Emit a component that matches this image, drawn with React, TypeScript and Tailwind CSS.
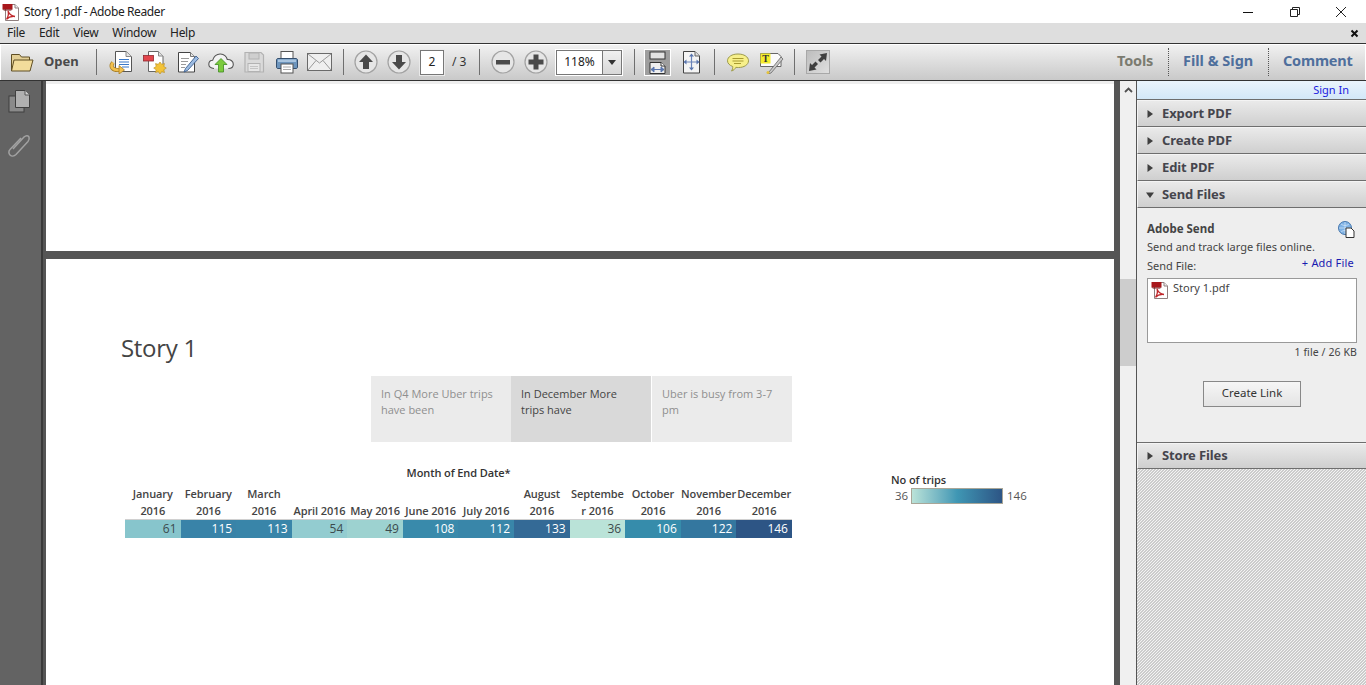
import React from "react";

const ui = { fontFamily: '"Noto Sans", "Open Sans", sans-serif' };
const story = { fontFamily: '"Open Sans", "Noto Sans", sans-serif' };

const PdfIcon = ({ size = 18 }: { size?: number }) => (
  <svg width={size} height={size} viewBox="0 0 18 18">
    <path d="M3.500 1.500H13l3.500 3.500v12.500h-13z" fill="#fff" stroke="#8f7f7f" />
    <path d="M13 1.500V5h3.500" fill="#eee" stroke="#8f7f7f" />
    <path d="M0.500 1h10v5.500h-10z" fill="#a8181c" />
    <path d="M0.500 6.500h10l-1.500 1h-7z" fill="#701012" />
    <path d="M6 8c1.200 3 3 5 7 5.500-3-.3-6.500.5-8.500 2.800C6 14 7 11 6 8z" fill="none" stroke="#c0262a" strokeWidth="1.300" />
  </svg>
);

const Sv = ({ children, w = 24, h = 24 }: { children: React.ReactNode; w?: number; h?: number }) => (
  <svg width={w} height={h} viewBox={`0 0 ${w} ${h}`} className="block">
    {children}
  </svg>
);

const IconCombine = () => (
  <Sv w={25}>
    <path d="M6.500 1.500H17l5.500 5v15h-16z" fill="#fff" stroke="#555" />
    <path d="M17 1.500v5h5.500" fill="#e2e2e2" stroke="#888" />
    <path d="M10 9.500h10M10 12h10M10 14.500h10M13 17h7" stroke="#3a78c8" strokeWidth="1.200" />
    <path d="M4 12.500C.5 17 4 20.500 10 20" fill="none" stroke="#a87f28" strokeWidth="4" />
    <path d="M4 12.500C.5 17 4 20.500 10 20" fill="none" stroke="#f2c04d" strokeWidth="2.600" />
    <path d="M10 15.500l5.500 4.500-5.500 4z" fill="#f2c04d" stroke="#a87f28" strokeWidth="0.800" />
  </Sv>
);
const IconCreate = () => (
  <Sv>
    <path d="M5.500 1.500H15.500l4.500 4.500v15.500H5.500z" fill="#fff" stroke="#666" />
    <path d="M15.500 1.500V6H20" fill="#e2e2e2" stroke="#888" />
    <rect x="0.500" y="5.500" width="10" height="5.500" fill="#e2454c" stroke="#8f2a30" strokeWidth="0.800" />
    <path d="M17 12l1.700 2.300 2.800-.7-.7 2.800 2.500 1.700-2.500 1.700.7 2.700-2.800-.7L17 24l-1.700-2.200-2.800.7.700-2.700L10.700 18.100l2.500-1.700-.7-2.800 2.800.7z" fill="#f3c338" stroke="#b48a20" strokeWidth="0.600" />
  </Sv>
);
const IconEdit = () => (
  <Sv>
    <path d="M2.500 2.500H14.500l4 4v15.500h-16z" fill="#fff" stroke="#444" />
    <path d="M14.500 2.500v4h4" fill="#e6e6e6" stroke="#777" />
    <path d="M5 8.500h8M5 11.500h7M5 14.500h5M5 17.500h4" stroke="#9a9a9a" />
    <path d="M9.500 18.500L8 22l3.500-1.500L22.500 8.500 20 6z" fill="#9dbce2" stroke="#3c5f90" strokeWidth="0.900" />
  </Sv>
);
const IconCloud = () => (
  <Sv w={26}>
    <path d="M6 18.500C2.500 18.500.8 16.500.8 14.200.8 12 2.500 10.300 4.700 10.200 5.500 6.500 8.700 3.800 12.500 4c3.500.2 6 2.500 6.800 5.500 3.500-.2 6 2 6 4.700 0 2.500-2 4.300-5 4.300" fill="#f3f3f3" stroke="#555" strokeWidth="1.100" />
    <path d="M13 8.500l6 6h-3.500V22h-5v-7.500H7z" fill="#7ccb3e" stroke="#3f8a22" strokeWidth="0.800" />
  </Sv>
);
const IconSave = () => (
  <Sv>
    <path d="M3 2.500h16l2.500 2.500v17H3z" fill="#dadada" stroke="#b2b2b2" strokeWidth="1.200" />
    <rect x="7" y="3" width="10" height="6" fill="#cfcfcf" stroke="#b2b2b2" />
    <rect x="6" y="13.500" width="12" height="8" fill="#e6e6e6" stroke="#b2b2b2" />
    <path d="M8 16.500h8M8 18.500h8" stroke="#c4c4c4" />
  </Sv>
);
const IconPrint = () => (
  <Sv>
    <rect x="6" y="1.500" width="12" height="8" fill="#fff" stroke="#555" />
    <path d="M3 8.500h18c1 0 1.500.8 1.500 1.500v7c0 1-.6 1.500-1.500 1.500H3c-1 0-1.500-.6-1.500-1.500v-7c0-.8.500-1.500 1.500-1.500z" fill="#6d95bd" stroke="#354f6e" />
    <rect x="3" y="9.500" width="18" height="2.500" fill="#a9c5e0" />
    <rect x="6" y="14" width="12" height="9" fill="#fff" stroke="#555" />
    <path d="M8 17h8M8 19.500h8" stroke="#aaa" />
  </Sv>
);
const IconMail = () => (
  <Sv w={25}>
    <rect x="0.500" y="3.500" width="24" height="17" fill="#efefef" stroke="#6a6a6a" />
    <path d="M1 4L12.500 13 24 4M1 20L9 10.500M24 20L16 10.500" fill="none" stroke="#9a9a9a" />
  </Sv>
);
const Circle = ({ d }: { d: string }) => (
  <Sv>
    <circle cx="12" cy="12" r="11" fill="#e6e6e6" stroke="#a2a2a2" strokeWidth="1.200" />
    <path d={d} fill="#4a4a4a" />
  </Sv>
);
const IconFitWidth = () => (
  <div className="w-[27px] h-[27px] bg-[#9e9e9e] border border-white flex items-center justify-center">
    <svg width="19" height="23" viewBox="0 0 19 23" className="block">
      <rect x="2" y="1" width="15" height="7" fill="#e2e2e2" stroke="#333" />
      <path d="M2 11.500h11l4 3.500v7.500H2z" fill="#efefef" stroke="#333" />
      <path d="M13 11.500V15h4" fill="#fff" stroke="#333" />
      <path d="M3 18.500h13M3 18.500l3-2.500v5zM16 18.500l-3-2.500v5z" fill="#5a76ae" stroke="#5a76ae" />
    </svg>
  </div>
);
const IconFitPage = () => (
  <Sv>
    <path d="M4.500 1.500H16l4.500 4.500v17h-16z" fill="#f4f4f4" stroke="#444" />
    <path d="M16 1.500V6h4.500" fill="#ddd" stroke="#666" />
    <path d="M12.500 5v14M5.500 12h14" stroke="#6a83b8" strokeWidth="1.200" />
    <path d="M12.500 3.500l2.500 3h-5zM12.500 20.500l2.500-3h-5zM4.500 12l3-2.500v5zM20.500 12l-3-2.500v5z" fill="#5a76ae" />
  </Sv>
);
const IconComment = () => (
  <Sv>
    <path d="M12 4c6 0 10.500 2.800 10.500 6.800S18 17.500 12.500 17.500c-1 0-1.800 0-2.600-.2C9 19 7.500 20.500 5.500 21c1-1.200 1.300-3 1.200-4.500C3.500 15.300 1.500 13.300 1.500 10.800 1.500 6.800 6 4 12 4z" fill="#f7f08a" stroke="#9c9a4c" />
    <path d="M6.500 8.500h11M6.500 11h11M8 13.500h7" stroke="#a89a30" />
  </Sv>
);
const IconNote = () => (
  <Sv w={26}>
    <path d="M2.500 3.500H20l3 3v10H2.500z" fill="#fbfbfb" stroke="#666" />
    <rect x="2.500" y="3.500" width="10" height="10" fill="#f4ec2c" />
    <text x="7.500" y="12" fontSize="10" textAnchor="middle" fontWeight="700" fill="#333" style={{ fontFamily: '"Liberation Serif", serif' }}>T</text>
    <path d="M11 22l-1 2 3-1L25 9l-2-2z" fill="#c9c9c9" stroke="#666" strokeWidth="0.800" />
    <circle cx="10" cy="22.500" r="1.500" fill="#e5c23a" />
  </Sv>
);
const IconFull = () => (
  <div className="w-[24px] h-[24px] border border-[#a8a8a8] bg-gradient-to-br from-[#bdbdbd] to-[#dfdfdf] flex items-center justify-center">
    <svg width="22" height="22" viewBox="0 0 22 22" className="block">
      <path d="M20 2l-7.500 1.500 2 2-3.500 3.500 2.500 2.500 3.500-3.500 2 2z" fill="#3f3f3f" />
      <path d="M2 20l7.500-1.500-2-2 3.500-3.500L8.500 10.500 5 14l-2-2z" fill="#3f3f3f" />
    </svg>
  </div>
);

const Folder = () => (
  <svg width="24" height="22" viewBox="0 0 24 22" className="block">
    <path d="M1.500 20V3.500h8l2 2.500h8v3" fill="#e3cf95" stroke="#5f4e24" />
    <path d="M1.500 20L4 9h19l-3 11z" fill="#f2dc9b" stroke="#5f4e24" />
  </svg>
);

const Slot = ({ children, className = "" }: { children: React.ReactNode; className?: string }) => (
  <div className={`w-[33px] flex items-center justify-center ${className}`}>{children}</div>
);

const Sep = ({ className = "" }: { className?: string }) => (
  <div className={`w-px h-[26px] bg-[#6f6f6f] ${className}`} />
);
const Dotted = () => <div className="h-[28px] border-l border-dotted border-[#555]" />;

const Section = ({ label, open = false, size = "h-[27px] pt-[1px]" }: { label: string; open?: boolean; size?: string }) => (
  <div className={`${size} flex items-center pl-[8px] border-b border-[#6e6e6e] border-l border-l-[#f4f4f4] shadow-[inset_0_1px_0_#f4f4f4] bg-gradient-to-b from-[#ebebeb] to-[#cfcfcf]`}>
    <svg width="8" height="8" viewBox="0 0 8 8" className="block mr-[8px]">
      {open ? <path d="M0 1.500h8L4 7z" fill="#3f3f3f" /> : <path d="M1.500 0L7 4 1.500 8z" fill="#3f3f3f" />}
    </svg>
    <span className="text-[13px] font-bold text-[#45454d] whitespace-nowrap tracking-[-0.1px]">{label}</span>
  </div>
);

const months: { l: React.ReactNode; v: number; bg: string; light?: boolean }[] = [
  { l: <>January<br />2016</>, v: 61, bg: "bg-[#87c5cc]", light: true },
  { l: <>February<br />2016</>, v: 115, bg: "bg-[#3983a8]" },
  { l: <>March<br />2016</>, v: 113, bg: "bg-[#3985a9]" },
  { l: "April 2016", v: 54, bg: "bg-[#93ccd0]", light: true },
  { l: "May 2016", v: 49, bg: "bg-[#9dd2d0]", light: true },
  { l: "June 2016", v: 108, bg: "bg-[#398aab]" },
  { l: "July 2016", v: 112, bg: "bg-[#3986a9]" },
  { l: <>August<br />2016</>, v: 133, bg: "bg-[#346a96]" },
  { l: <>Septembe<br />r 2016</>, v: 36, bg: "bg-[#bae3d8]", light: true },
  { l: <>October<br />2016</>, v: 106, bg: "bg-[#368cab]" },
  { l: <>November<br />2016</>, v: 122, bg: "bg-[#34779f]" },
  { l: <>December<br />2016</>, v: 146, bg: "bg-[#2d5585]" },
];

const Tab = ({ children, active = false, className = "" }: { children: React.ReactNode; active?: boolean; className?: string }) => (
  <div className={`w-[140px] h-[66px] pl-[10px] pt-[10px] text-[11px] leading-[16px] ${active ? "bg-[#d9d9d9] text-[#444]" : "bg-[#ebebeb] text-[#8f8f8f]"} ${className}`}>
    {children}
  </div>
);

export default function App() {
  return (
    <div className="w-[1366px] h-[685px] overflow-hidden flex flex-col bg-white" style={ui}>
      {/* Title bar */}
      <div className="h-[23px] flex items-center bg-white shrink-0">
        <div className="ml-[2px] w-[22px]"><PdfIcon /></div>
        <span className="text-[12px] text-[#222] whitespace-nowrap tracking-[-0.4px]">Story 1.pdf - Adobe Reader</span>
        <div className="ml-auto flex items-center">
          <svg width="12" height="12" viewBox="0 0 12 12" className="block mr-[35px]"><path d="M1 6.500h10" stroke="#111" /></svg>
          <svg width="12" height="12" viewBox="0 0 12 12" className="block mr-[34px]"><path d="M1.500 3.500h7v7h-7zM3.500 3.500v-2h7v7h-2" fill="none" stroke="#222" /></svg>
          <svg width="12" height="12" viewBox="0 0 12 12" className="block mr-[19px]"><path d="M1 1l10 10M11 1L1 11" stroke="#222" /></svg>
        </div>
      </div>
      {/* Menu bar */}
      <div className="h-[20px] flex items-center bg-[#dedede] shrink-0 text-[12px] text-[#222] pl-[7px] gap-[14px] tracking-[-0.3px]">
        <span>File</span><span>Edit</span><span>View</span><span>Window</span><span>Help</span>
        <svg width="9" height="9" viewBox="0 0 9 9" className="block ml-auto mr-[7px]"><path d="M1.500 1.500l6 6M7.500 1.500l-6 6" stroke="#111" strokeWidth="2" /></svg>
      </div>
      {/* Toolbar */}
      <div className="h-[38px] shrink-0 border-y border-[#333] bg-gradient-to-b from-[#f2f2f2] to-[#c9c9c9] flex items-center shadow-[inset_1px_1px_0_#fff,inset_-1px_0_0_#fff]">
        <div className="w-[96px] flex items-center pl-[10px] shrink-0">
          <Folder />
          <span className="ml-[10px] text-[13px] font-bold text-[#4a4a4a]">Open</span>
        </div>
        <Sep />
        <Slot className="ml-[8px]"><IconCombine /></Slot>
        <Slot><IconCreate /></Slot>
        <Slot><IconEdit /></Slot>
        <Slot><IconCloud /></Slot>
        <Slot><IconSave /></Slot>
        <Slot><IconPrint /></Slot>
        <Slot><IconMail /></Slot>
        <Sep className="ml-[7px]" />
        <Slot className="ml-[5px]"><Circle d="M12 4.500l7 7.500h-4v7H9v-7H5z" /></Slot>
        <Slot><Circle d="M12 19.500L5 12h4V5h6v7h4z" /></Slot>
        <div className="ml-[4px] w-[26px] h-[27px] bg-white border border-[#e9e9e9] outline outline-1 outline-[#777] -outline-offset-2 flex items-center justify-center text-[12px] text-[#222]">2</div>
        <div className="ml-[7px] w-[17px] text-[12px] text-[#333] whitespace-nowrap">/ 3</div>
        <Sep className="ml-[10px]" />
        <Slot className="ml-[6px]"><Circle d="M5 10h14v4.500H5z" /></Slot>
        <Slot><Circle d="M9.500 4.500h5v5h5v5h-5v5h-5v-5h-5v-5h5z" /></Slot>
        <div className="ml-[3px] w-[68px] h-[27px] flex border border-white bg-[#777] p-px shrink-0">
          <div className="w-[45px] bg-white flex items-center justify-center text-[12px] text-[#222]">118%</div>
          <div className="flex-1 ml-px bg-gradient-to-b from-[#f0f0f0] to-[#d8d8d8] flex items-center justify-center">
            <svg width="8" height="5" viewBox="0 0 8 5" className="block"><path d="M0 0h8L4 5z" fill="#333" /></svg>
          </div>
        </div>
        <Sep className="ml-[11px]" />
        <Slot className="ml-[6px]"><IconFitWidth /></Slot>
        <Slot><IconFitPage /></Slot>
        <Sep className="ml-[7px]" />
        <Slot className="ml-[6px]"><IconComment /></Slot>
        <Slot><IconNote /></Slot>
        <Sep className="ml-[7px]" />
        <Slot className="ml-[6px]"><IconFull /></Slot>
        <div className="ml-auto flex items-center pr-[14px] text-[14.500px] font-bold whitespace-nowrap">
          <div className="w-[37px] text-[#7b7b70] mt-[-3px] tracking-[-0.2px]">Tools</div>
          <div className="ml-[14px]"><Dotted /></div>
          <div className="ml-[14px] w-[71px] text-[#4f6f9c] mt-[-3px]">Fill &amp; Sign</div>
          <div className="ml-[14px]"><Dotted /></div>
          <div className="ml-[14px] w-[69px] text-[#4f6f9c] mt-[-3px] tracking-[-0.2px]">Comment</div>
        </div>
      </div>
      {/* Body */}
      <div className="flex-1 flex min-h-0">
        {/* Left nav */}
        <div className="w-[41px] shrink-0 bg-[#636363] flex flex-col items-center pt-[8px]">
          <svg width="24" height="24" viewBox="0 0 24 24" className="block ml-[-4px]">
            <rect x="2" y="7" width="15" height="16" fill="#8a8a8a" stroke="#3f3f3f" />
            <path d="M8.500 1.500H18l4.500 4.500v12.500h-14z" fill="#b0b0b0" stroke="#3f3f3f" />
            <path d="M18 1.500V6h4.500" fill="#d0d0d0" stroke="#555" />
          </svg>
          <svg width="24" height="24" viewBox="0 0 24 24" className="block mt-[20px] ml-[-4px]">
            <path d="M6 16l11-12c2-2 4.500-1.500 5 0s.3 3-1 4.500L9 21.500c-2 2-4.500 2-6 .5S1.500 18 3 16.500L14 5" fill="none" stroke="#a2a2a2" strokeWidth="1.500" />
          </svg>
        </div>
        <div className="w-[5px] shrink-0 bg-[#555] border-l-2 border-[#3a3a3a]" />
        {/* Document */}
        <div className="w-[1068px] shrink-0 flex flex-col overflow-hidden">
          <div className="h-[170px] shrink-0 bg-white border-t-[3px] border-[#eeeeee]" />
          <div className="h-[8px] shrink-0 bg-[#555]" />
          <div className="flex-1 bg-white text-[#333]" style={story}>
            <div className="ml-[75px] mt-[73px] h-[32px] text-[24px] leading-[32px] text-[#444] tracking-[-0.3px]">Story 1</div>
            <div className="ml-[325px] mt-[12px] flex">
              <Tab>In Q4 More Uber trips<br />have been</Tab>
              <Tab active>In December More<br />trips have</Tab>
              <Tab className="ml-px">Uber is busy from 3-7<br />pm</Tab>
            </div>
            <div className="flex">
              <div className="ml-[79px] w-[667px] shrink-0">
                <div className="mt-[23px] h-[16px] text-center text-[11px] leading-[16px] font-semibold text-[#333] tracking-[-0.1px]">Month of End Date*</div>
                <div className="mt-[4px] h-[34px] grid grid-cols-12 items-end">
                  {months.map((m, i) => (
                    <div key={i} className="text-center text-[11px] leading-[17px] font-semibold text-[#444] whitespace-nowrap flex justify-center tracking-[-0.1px]">
                      <div>{m.l}</div>
                    </div>
                  ))}
                </div>
                <div className="grid grid-cols-12 h-[18px] border-t border-[#d0d0d0]">
                  {months.map((m, i) => (
                    <div key={i} className={`${m.bg} ${m.light ? "text-[#3c4a4c]" : "text-white"} text-right pr-[4px] text-[12px] leading-[18px]`}>{m.v}</div>
                  ))}
                </div>
              </div>
              <div className="ml-[99px] mt-[30px] text-[11px]">
                <div className="h-[16px] leading-[16px] font-semibold text-[#333] tracking-[-0.1px]">No of trips</div>
                <div className="flex items-center h-[16px] text-[11.500px] text-[#555]">
                  <span className="w-[20px] pl-[4px]">36</span>
                  <div className="w-[92px] h-[16px] border border-[#a9a698] bg-gradient-to-r from-[#bae3d8] via-[#3f97b4] to-[#2d5585]" />
                  <span className="ml-[4px]">146</span>
                </div>
              </div>
            </div>
          </div>
        </div>
        <div className="w-[6px] shrink-0 bg-[#555]" />
        {/* Scrollbar */}
        <div className="w-[16px] shrink-0 bg-[#f0f0f0] flex flex-col items-center">
          <svg width="9" height="6" viewBox="0 0 9 6" className="block mt-[6px]"><path d="M1 5l3.500-3.500L8 5" fill="none" stroke="#505050" strokeWidth="1.800" /></svg>
          <div className="mt-[186px] w-full h-[87px] bg-[#cdcdcd]" />
        </div>
        {/* Right panel */}
        <div className="flex-1 flex flex-col border-l border-[#555] min-w-0">
          <div className="h-[19px] shrink-0 flex items-center justify-end pr-[17px] text-[11px] text-[#1a1ae0] bg-gradient-to-b from-[#eaf4fc] to-[#d3e8f8] border-b border-[#6e6e6e]">Sign In</div>
          <Section label="Export PDF" />
          <Section label="Create PDF" />
          <Section label="Edit PDF" />
          <Section label="Send Files" open />
          <div className="h-[234px] shrink-0 bg-[#eeeeee] px-[10px] pr-[9px] flex flex-col">
            <div className="mt-[13px] h-[16px] flex items-center justify-between">
              <span className="text-[11.500px] font-bold text-[#444]">Adobe Send</span>
              <svg width="17" height="17" viewBox="0 0 17 17" className="block mr-[2px]">
                <circle cx="7" cy="7" r="6.500" fill="#7fb2e5" stroke="#4677ad" />
                <path d="M1 7h12M7 1v12M3 3c2 2 6 2 8 0M3 11c2-2 6-2 8 0" fill="none" stroke="#d7e8f8" strokeWidth="0.700" />
                <path d="M8 7h5l3 3v6.500H8z" fill="#fff" stroke="#333" />
              </svg>
            </div>
            <div className="mt-[2px] h-[16px] leading-[16px] text-[11px] text-[#444] whitespace-nowrap">Send and track large files online.</div>
            <div className="mt-[3px] h-[16px] flex justify-between text-[11px] leading-[16px] text-[#444]">
              <span>Send File:</span>
              <span className="text-[#1a1ab0] mt-[-3px] mr-[3px] tracking-[0.2px]">+ Add File</span>
            </div>
            <div className="mt-[4px] h-[65px] w-[210px] bg-white border border-[#999] pl-[3px] pt-[2px] flex items-start">
              <PdfIcon size={18} />
              <span className="ml-[4px] text-[11px] leading-[14px] text-[#444]">Story 1.pdf</span>
            </div>
            <div className="mt-[1px] w-[210px] h-[16px] text-right text-[10.500px] leading-[16px] text-[#444] tracking-[0.1px]">1 file / 26 KB</div>
            <div className="mt-[21px] ml-[56px] w-[98px] h-[26px] border border-[#888] bg-gradient-to-b from-[#f6f6f6] to-[#e4e4e4] flex items-center justify-center pb-[2px] text-[11.500px] text-[#333]">Create Link</div>
          </div>
          <div className="border-t border-[#6e6e6e] shrink-0 h-[27px]"><Section label="Store Files" size="h-[26px]" /></div>
          <div className="flex-1 bg-[repeating-linear-gradient(135deg,#cccccc_0,#cccccc_1px,#f4f4f4_1px,#f4f4f4_2.121px)]" />
        </div>
      </div>
    </div>
  );
}
